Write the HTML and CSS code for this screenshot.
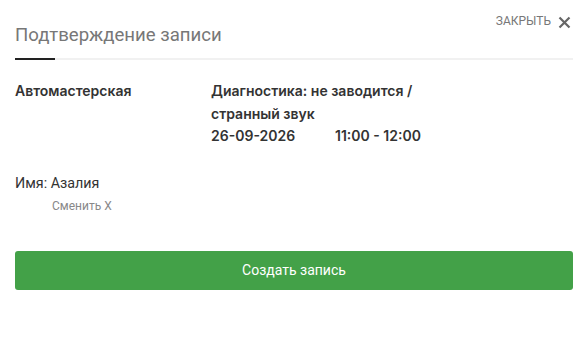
FILE: index.html
```html
<!DOCTYPE html>
<html lang="ru">
<head>
    <meta charset="UTF-8">
    <meta name="viewport" content="width=device-width, initial-scale=1.0">
    <title>Подтверждение записи</title>
    <link rel="stylesheet" href="styles.css">
</head>
<body>
    <div class="modal">
        <div class="close">
            <span>ЗАКРЫТЬ</span>
            <svg width="13" height="13" viewBox="0 0 13 13">
                <path d="M1.5 1.5 L11.5 11.5 M11.5 1.5 L1.5 11.5" stroke="#666" stroke-width="2.2" fill="none"/>
            </svg>
        </div>
        <h2 class="title">Подтверждение записи</h2>
        <div class="tabline"><div class="active"></div></div>

        <div class="info">
            <div class="place">Автомастерская</div>
            <div class="service">
                <p>Диагностика: не заводится /<br>странный звук</p>
                <p class="when"><span class="date">26-09-2026</span><span>11:00 - 12:00</span></p>
            </div>
        </div>

        <div class="client">
            <p class="name">Имя: Азалия</p>
            <a class="change">Сменить X</a>
        </div>

        <button class="submit">Создать запись</button>
    </div>
</body>
</html>
```

FILE: styles.css
```css
* {
    margin: 0;
    padding: 0;
    box-sizing: border-box;
}

body {
    background: #fff;
    font-family: Roboto, "Liberation Sans", Arial, sans-serif;
    color: #333;
}

.modal {
    position: relative;
    padding: 25px 15px 0 15px;
}

.close {
    position: absolute;
    top: 13px;
    right: 17px;
    display: flex;
    align-items: center;
    gap: 7px;
    color: #777;
    font-size: 12px;
}

.close svg {
    margin-top: 3px;
}

.title {
    font-size: 18.6px;
    font-weight: 400;
    color: #777;
    line-height: 20px;
}

.tabline {
    margin-top: 13px;
    height: 2px;
    background: #f1f1f1;
}

.tabline .active {
    width: 40px;
    height: 2px;
    background: #222;
}

.info {
    display: flex;
    margin-top: 20px;
    font-family: Inter, "Noto Sans", sans-serif;
    font-weight: 600;
    font-size: 14px;
    line-height: 22.5px;
    color: #333;
}

.place {
    width: 196px;
}

.when {
    display: flex;
}

.date {
    width: 124px;
}

.client {
    margin-top: 26px;
}

.name {
    font-size: 14.3px;
    line-height: 18px;
    color: #333;
}

.change {
    display: block;
    margin-top: 7px;
    margin-left: 37px;
    font-size: 12px;
    color: #888;
}

.submit {
    display: block;
    width: 100%;
    height: 39px;
    margin-top: 38px;
    border: none;
    border-radius: 3px;
    background: #43a148;
    color: #fff;
    font-family: Roboto, "Liberation Sans", Arial, sans-serif;
    font-size: 14px;
}
```
